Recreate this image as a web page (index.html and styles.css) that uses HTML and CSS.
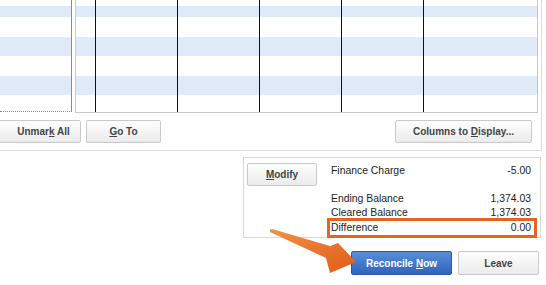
FILE: index.html
```html
<!DOCTYPE html>
<html>
<head>
<meta charset="utf-8">
<link rel="stylesheet" href="styles.css">
</head>
<body>
<div class="top">
  <div class="grid">
    <div class="left-pane"></div>
    <div class="right-pane">
      <div class="col first"></div>
      <div class="col"></div>
      <div class="col"></div>
      <div class="col"></div>
      <div class="col"></div>
      <div class="col last"></div>
    </div>
  </div>
  <div class="btnrow">
    <button class="btn unmark"><span>Unmar<u>k</u> All</span></button>
    <button class="btn goto"><span><u>G</u>o To</span></button>
    <div class="spacer"></div>
    <button class="btn columns"><span>Columns to <u>D</u>isplay...</span></button>
  </div>
</div>
<div class="bottom">
  <div class="summary">
    <button class="btn modify"><span><u>M</u>odify</span></button>
    <div class="figures">
      <div class="row finance"><span>Finance Charge</span><span>-5.00</span></div>
      <div class="row ending"><span>Ending Balance</span><span>1,374.03</span></div>
      <div class="row"><span>Cleared Balance</span><span>1,374.03</span></div>
      <div class="row highlight"><span>Difference</span><span>0.00</span></div>
    </div>
  </div>
  <div class="actions">
    <button class="btn primary"><span>Reconcile <u>N</u>ow</span></button>
    <button class="btn leave"><span>Leave</span></button>
  </div>
</div>
<svg class="arrow" width="546" height="285" viewBox="0 0 546 285">
  <defs>
    <linearGradient id="ag" x1="0" y1="0" x2="1" y2="1">
      <stop offset="0" stop-color="#f29048"/>
      <stop offset="1" stop-color="#e05c16"/>
    </linearGradient>
  </defs>
  <polygon points="270,229.5 272,229 330,246 338,243 356,262 330,273 326,258 270,232" fill="url(#ag)"/>
</svg>
</body>
</html>
```

FILE: styles.css
```css
* { box-sizing: border-box; }
html, body { margin: 0; padding: 0; }
body {
  width: 546px;
  height: 285px;
  overflow: hidden;
  background: #fff;
  font-family: "Liberation Sans", Arial, sans-serif;
  color: #222;
  position: relative;
}
.top {
  width: 542px;
  height: 151px;
  border-right: 1px solid #dcdcdc;
  border-bottom: 1px solid #dcdcdc;
}
.grid {
  display: flex;
  height: 113px;
}
.left-pane, .right-pane {
  background: linear-gradient(to bottom,
    #fff 0, #fff 6px,
    #dfe9f8 6px, #dfe9f8 17px,
    #fff 17px, #fff 37px,
    #dfe9f8 37px, #dfe9f8 56px,
    #fff 56px, #fff 76px,
    #dfe9f8 76px, #dfe9f8 95px,
    #fff 95px);
}
.left-pane {
  width: 72px;
  height: 112px;
  border-right: 1px solid #8a8a8a;
  border-bottom: 1px dotted #8a8a8a;
}
.right-pane {
  margin-left: 3px;
  width: 463px;
  height: 113px;
  border-left: 1px solid #c8c8c8;
  border-right: 1px solid #c8c8c8;
  border-bottom: 1px solid #c8c8c8;
  display: flex;
}
.col {
  width: 82px;
  border-left: 1px solid #111;
}
.col.first { width: 19px; border-left: none; }
.col.last { flex: 1; }
.btnrow {
  display: flex;
  margin-top: 7px;
  padding-right: 9px;
}
.spacer { flex: 1; }
.btn {
  font-family: "Liberation Sans", Arial, sans-serif;
  font-weight: bold;
  font-size: 10px;
  color: #444;
  height: 23px;
  padding: 0;
  background: linear-gradient(to bottom, #fefefe, #ebebeb);
  border: 1px solid #c9c9c9;
  border-radius: 2px;
  display: flex;
  align-items: center;
  justify-content: center;
  white-space: pre;
}
.btn u { text-decoration: underline; }
.unmark { margin-left: -6px; width: 87px; padding-left: 12px; }
.goto { margin-left: 5px; width: 75px; }
.columns { width: 137px; }
.bottom {
  margin-left: 243px;
  width: 298px;
  margin-top: 6px;
}
.summary {
  height: 81px;
  border: 1px solid #d8d8d8;
  display: flex;
  padding: 5px 9px 0 3px;
}
.modify { width: 70px; height: 23px; }
.figures {
  flex: 1;
  margin-left: 14px;
  padding-top: 1px;
  font-size: 10.4px;
  color: #222;
}
.row {
  display: flex;
  justify-content: space-between;
  height: 14.6px;
  line-height: 14.6px;
}
.ending { margin-top: 13px; }
.highlight {
  outline: 3px solid #e2661f;
  outline-offset: 0;
  margin-left: -1px;
  margin-right: -3px;
  padding: 0 3px 0 1px;
}
.actions {
  display: flex;
  justify-content: flex-end;
  gap: 6px;
  margin-top: 13px;
  padding-right: 2px;
}
.primary {
  width: 101px;
  height: 24px;
  color: #fff;
  background: linear-gradient(to bottom, #588ed9, #2f64bb);
  border: 1px solid #2b579f;
}
.leave { width: 81px; height: 24px; }
.arrow {
  position: absolute;
  left: 0;
  top: 0;
  pointer-events: none;
}
```
